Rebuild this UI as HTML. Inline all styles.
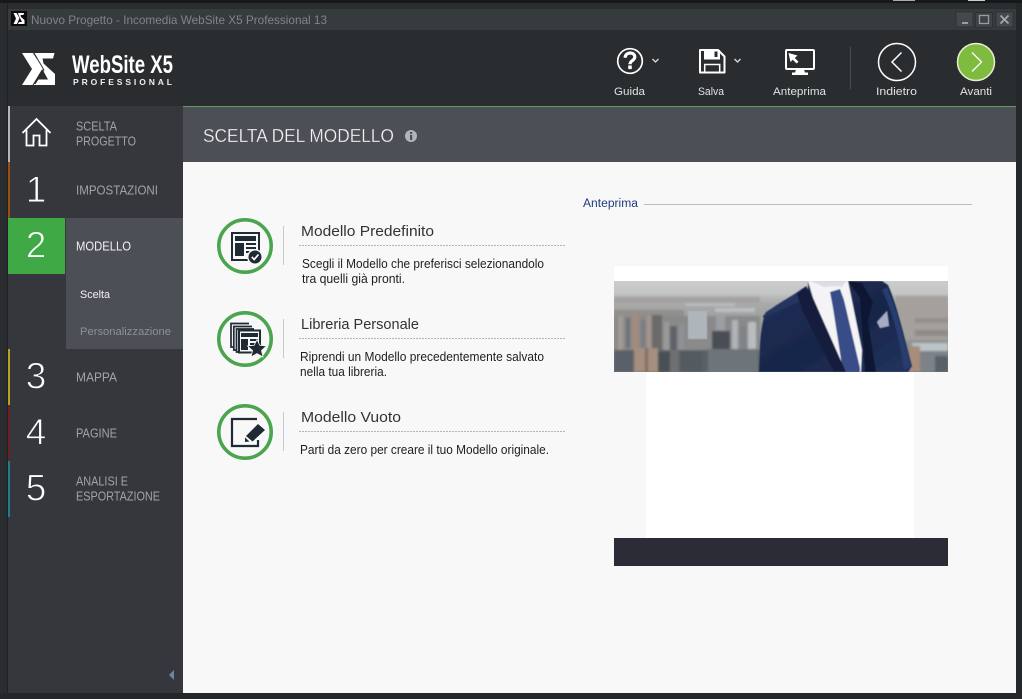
<!DOCTYPE html>
<html lang="it">
<head>
<meta charset="utf-8">
<title>Incomedia WebSite X5</title>
<style>
html,body{margin:0;padding:0;background:#2a2d30;width:1022px;height:699px;overflow:hidden}
svg{display:block}
text{font-family:"Liberation Sans",sans-serif}
</style>
</head>
<body>
<svg xmlns="http://www.w3.org/2000/svg" width="1022" height="699" viewBox="0 0 1022 699">
<defs>
<linearGradient id="sky" x1="0" y1="0" x2="0" y2="1">
<stop offset="0" stop-color="#cbcdcc"/><stop offset=".13" stop-color="#c3c6c5"/>
<stop offset=".25" stop-color="#a8a9a8"/><stop offset=".7" stop-color="#8f9194"/><stop offset="1" stop-color="#70767c"/>
</linearGradient>
<linearGradient id="suit" x1="0" y1="0" x2="1" y2="1">
<stop offset="0" stop-color="#22325a"/><stop offset=".55" stop-color="#18264a"/><stop offset="1" stop-color="#22345e"/>
</linearGradient>
<filter id="b2" x="-5%" y="-5%" width="110%" height="110%"><feGaussianBlur stdDeviation="1"/></filter>
<filter id="b3" x="-5%" y="-5%" width="110%" height="110%"><feGaussianBlur stdDeviation=".5"/></filter>
<clipPath id="img"><rect x="614" y="281" width="334" height="91"/></clipPath>
</defs>

<!-- frame -->
<rect width="1022" height="699" fill="#2a2d30"/>
<rect width="1022" height="3" fill="#17181a"/>
<rect x="893" y="0" width="22" height="1" fill="#aaa"/>
<rect x="968" y="0" width="17" height="1" fill="#ccc"/>
<rect x="7" y="3" width="1" height="690" fill="#1f2123"/>
<rect x="0" y="693" width="1022" height="6" fill="#24272a"/>
<rect x="1016" y="3" width="6" height="696" fill="#25282b"/>

<!-- title bar -->
<rect x="8" y="9" width="1008" height="21" fill="#363b3e"/>
<rect x="11" y="11" width="16" height="15" fill="#0c0c0c"/>
<path d="M13.500,13H16.500L19.500,18L17,24H13.500L16,18.500ZM18,13H24L23.500,15H20.500L21,17L24.500,20V24H18L19,22H22L18.500,15Z" fill="#fff"/>
<text x="31" y="24" font-size="12" fill="#7f8588" textLength="296" lengthAdjust="spacingAndGlyphs">Nuovo Progetto - Incomedia WebSite X5 Professional 13</text>

<!-- window buttons -->
<rect x="956" y="12" width="17" height="15" fill="#45494c" stroke="#2e3235"/>
<rect x="962" y="22" width="6" height="2" fill="#9a9ea1"/>
<rect x="975.500" y="12.500" width="17" height="15" fill="#3f4346" stroke="#2e3235"/>
<rect x="979.500" y="15.500" width="9" height="8" fill="none" stroke="#9a9ea1" stroke-width="1.300"/>
<rect x="996" y="12" width="17" height="15" fill="#45494c" stroke="#2e3235"/>
<path d="M1000.500,15.500L1008.500,23.500M1008.500,15.500L1000.500,23.500" stroke="#a5a9ac" stroke-width="1.800"/>

<!-- logo -->
<path d="M22,53H33L42.500,68.500L32.500,85H22L32,69Z" fill="#fff"/>
<path d="M34.500,53H54.500L53,58.500H42.500L43.500,63.500L55,74V85H33.500L38.500,79.500H48L37.500,60.500Z" fill="#fff"/>
<path d="M34,53L44,70L35,84" fill="none" stroke="#2a2d30" stroke-width=".9"/>
<text x="72" y="73" font-size="25" font-weight="bold" fill="#fff" textLength="101" lengthAdjust="spacingAndGlyphs">WebSite X5</text>
<text x="73" y="85" font-size="8.500" font-weight="bold" fill="#eee" textLength="99">PROFESSIONAL</text>

<!-- toolbar icons -->
<circle cx="630" cy="61" r="12.300" fill="none" stroke="#fff" stroke-width="1.700"/>
<path d="M625.200,57.800C625.200,51.500 634.800,51.500 634.800,57C634.800,60.500 630,60.500 630,64.200" fill="none" stroke="#fff" stroke-width="3.200"/>
<rect x="628.200" y="65.500" width="3.600" height="3.600" fill="#fff"/>
<path d="M652.500,59L655.500,62L658.500,59" fill="none" stroke="#ddd" stroke-width="1.300"/>

<path d="M700,50H718L724.500,56.500V72.500H700Z" fill="none" stroke="#fff" stroke-width="2" stroke-linejoin="round"/>
<rect x="704" y="50" width="16" height="9.500" fill="#fff"/>
<rect x="714.500" y="51.500" width="3" height="5.500" fill="#2a2d30"/>
<rect x="704.700" y="64.500" width="15" height="8" fill="none" stroke="#fff" stroke-width="1.500"/>
<path d="M734.500,59L737.500,62L740.500,59" fill="none" stroke="#ddd" stroke-width="1.300"/>

<rect x="786" y="50" width="28" height="19" rx="1" fill="none" stroke="#fff" stroke-width="2"/>
<path d="M788.500,53L797.500,55.500L794.800,58L798.500,61.800L796.500,63.500L792.800,59.800L790.500,62Z" fill="#fff"/>
<path d="M796,69.500H804L805,72.500H808V75H792V72.500H795Z" fill="#fff"/>

<rect x="850" y="47" width="1" height="42" fill="#4a4e51"/>
<circle cx="897" cy="62" r="18.500" fill="none" stroke="#fff" stroke-width="1.500"/>
<path d="M901.500,52.500L892,62L901.500,71.500" fill="none" stroke="#fff" stroke-width="1.500"/>
<circle cx="976" cy="62" r="18.500" fill="#7fbb3f" stroke="#e4efd2" stroke-width="1.500"/>
<path d="M972,52.500L981.500,62L972,71.500" fill="none" stroke="#f0f6e4" stroke-width="1.500"/>

<g font-size="11" fill="#dfe1e2">
<text x="614" y="95" textLength="31" lengthAdjust="spacingAndGlyphs">Guida</text>
<text x="698" y="95" textLength="26" lengthAdjust="spacingAndGlyphs">Salva</text>
<text x="773" y="95" textLength="53" lengthAdjust="spacingAndGlyphs">Anteprima</text>
<text x="876" y="95" textLength="41" lengthAdjust="spacingAndGlyphs">Indietro</text>
<text x="960" y="95" textLength="32" lengthAdjust="spacingAndGlyphs">Avanti</text>
</g>

<!-- sidebar -->
<rect x="8" y="106" width="175" height="587" fill="#36373c"/>
<rect x="8" y="106" width="2" height="56" fill="#b4b6b8"/>
<rect x="8" y="162" width="2" height="56" fill="#9a4f12"/>
<rect x="8" y="218" width="57" height="56" fill="#3faa45"/>
<rect x="66" y="218" width="117" height="131" fill="#4c4f56"/>
<rect x="8" y="349" width="2" height="56" fill="#b8a11c"/>
<rect x="8" y="405" width="2" height="56" fill="#6e1f26"/>
<rect x="8" y="461" width="2" height="56" fill="#1d7f8a"/>

<path d="M22.500,133L36.500,119L50.500,133" fill="none" stroke="#fff" stroke-width="1.800"/>
<path d="M26.500,130V145.500H33.500V135.500H39.500V145.500H46.500V130" fill="none" stroke="#fff" stroke-width="1.800"/>

<g font-size="37" fill="#fff" text-anchor="middle" stroke="#36373c" stroke-width=".9">
<text x="36" y="202">1</text>
<text x="36" y="257.500" stroke="#3faa45">2</text>
<text x="36" y="388.500">3</text>
<text x="36" y="444.500">4</text>
<text x="36" y="500.500">5</text>
</g>

<g font-size="12.500" fill="#a1a3a7">
<text x="76" y="130.500" textLength="41" lengthAdjust="spacingAndGlyphs">SCELTA</text>
<text x="76" y="145.500" textLength="60" lengthAdjust="spacingAndGlyphs">PROGETTO</text>
<text x="76" y="194.500" textLength="82" lengthAdjust="spacingAndGlyphs">IMPOSTAZIONI</text>
<text x="76" y="250.500" textLength="55" lengthAdjust="spacingAndGlyphs" fill="#f2f2f2">MODELLO</text>
<text x="76" y="381.500" textLength="41" lengthAdjust="spacingAndGlyphs">MAPPA</text>
<text x="76" y="437.500" textLength="41" lengthAdjust="spacingAndGlyphs">PAGINE</text>
<text x="76" y="485.500" textLength="52" lengthAdjust="spacingAndGlyphs">ANALISI E</text>
<text x="76" y="500.500" textLength="84" lengthAdjust="spacingAndGlyphs">ESPORTAZIONE</text>
</g>
<text x="80" y="298" font-size="11" fill="#f2f2f2" textLength="30" lengthAdjust="spacingAndGlyphs">Scelta</text>
<text x="80" y="335" font-size="11" fill="#8e9197" textLength="91" lengthAdjust="spacingAndGlyphs">Personalizzazione</text>
<path d="M174,670V680L169,675Z" fill="#6b86a8"/>

<!-- main -->
<rect x="183" y="106" width="833" height="56" fill="#4c4f56"/>
<rect x="183" y="106" width="833" height="1" fill="#5f9a62"/>
<rect x="183" y="162" width="833" height="531" fill="#f8f8f8"/>
<text x="203" y="142" font-size="18.500" fill="#f1f1f1" stroke="#4c4f56" stroke-width=".25" textLength="191" lengthAdjust="spacingAndGlyphs">SCELTA DEL MODELLO</text>
<circle cx="411" cy="136" r="6" fill="#b1b4b9"/>
<rect x="410" y="135" width="2.200" height="5" fill="#4c4f56"/>
<rect x="410" y="132" width="2.200" height="2" fill="#4c4f56"/>

<!-- option circles -->
<g fill="none" stroke="#4aa54e" stroke-width="3.600">
<circle cx="245" cy="246" r="26.200"/>
<circle cx="245" cy="339" r="26.200"/>
<circle cx="245" cy="432" r="26.200"/>
</g>
<g fill="#c9c9c9">
<rect x="283" y="226" width="1" height="39"/>
<rect x="283" y="319" width="1" height="39"/>
<rect x="283" y="412" width="1" height="39"/>
</g>
<g stroke="#b5b5b5" stroke-dasharray="2 1" stroke-width="1">
<path d="M299,245.500H565"/>
<path d="M299,338.500H565"/>
<path d="M299,431.500H565"/>
</g>

<!-- icon 1 -->
<rect x="232" y="233" width="27" height="27" fill="none" stroke="#1f2a35" stroke-width="2"/>
<rect x="235" y="236" width="21" height="5" fill="#1f2a35"/>
<rect x="235" y="243" width="9" height="13" fill="#1f2a35"/>
<rect x="246" y="243" width="10" height="2" fill="#1f2a35"/>
<rect x="246" y="247" width="10" height="2" fill="#1f2a35"/>
<rect x="246" y="251" width="6" height="2" fill="#1f2a35"/>
<circle cx="255" cy="257" r="8" fill="#f8f8f8"/>
<circle cx="255" cy="257" r="6.500" fill="#1f2a35"/>
<path d="M251.800,257L254.200,259.500L258.500,254.500" fill="none" stroke="#fff" stroke-width="1.700"/>

<!-- icon 2 -->
<g fill="none" stroke="#1f2a35" stroke-width="1.700">
<path d="M249,323.500H231V347H233"/>
<path d="M252,326.500H233.800V350H236"/>
<path d="M254,329H236.500V352H238"/>
</g>
<rect x="239" y="330.500" width="21" height="22" fill="#f8f8f8" stroke="#1f2a35" stroke-width="2"/>
<rect x="241" y="333" width="17" height="4" fill="#1f2a35"/>
<rect x="241" y="339" width="7" height="11" fill="#1f2a35"/>
<rect x="250" y="339" width="8" height="2" fill="#1f2a35"/>
<rect x="250" y="343" width="5" height="2" fill="#1f2a35"/>
<path d="M257,339.500L259.800,345.300L266.500,346L261.500,350.500L263,357L257,353.600L251,357L252.500,350.500L247.500,346L254.200,345.300Z" fill="#1f2a35" stroke="#f8f8f8" stroke-width=".8"/>

<!-- icon 3 -->
<path d="M257,419H232V446H258V440" fill="none" stroke="#1f2a35" stroke-width="2.200"/>
<path d="M258,424L265,430L252.500,441.500L246,436Z" fill="#1f2a35"/>
<path d="M245,437.500L249.500,441.500L245,442Z" fill="#1f2a35"/>

<!-- option texts -->
<g font-size="15" fill="#333">
<text x="301" y="236" textLength="133" lengthAdjust="spacingAndGlyphs">Modello Predefinito</text>
<text x="301" y="329" textLength="118" lengthAdjust="spacingAndGlyphs">Libreria Personale</text>
<text x="301" y="422" textLength="100" lengthAdjust="spacingAndGlyphs">Modello Vuoto</text>
</g>
<g font-size="12.500" fill="#1e1e1e">
<text x="302" y="268" textLength="242" lengthAdjust="spacingAndGlyphs">Scegli il Modello che preferisci selezionandolo</text>
<text x="302" y="283" textLength="103" lengthAdjust="spacingAndGlyphs">tra quelli già pronti.</text>
<text x="300" y="361" textLength="244" lengthAdjust="spacingAndGlyphs">Riprendi un Modello precedentemente salvato</text>
<text x="300" y="376" textLength="87" lengthAdjust="spacingAndGlyphs">nella tua libreria.</text>
<text x="300" y="454" textLength="249" lengthAdjust="spacingAndGlyphs">Parti da zero per creare il tuo Modello originale.</text>
</g>

<!-- preview -->
<text x="583" y="207" font-size="11.500" fill="#1f3a80" textLength="55" lengthAdjust="spacingAndGlyphs">Anteprima</text>
<rect x="644" y="204" width="328" height="1" fill="#bdbdbd"/>
<rect x="614" y="266" width="334" height="15" fill="#fff"/>
<rect x="646" y="372" width="268" height="166" fill="#fff"/>
<rect x="614" y="538" width="334" height="28" fill="#2c2c36"/>

<g clip-path="url(#img)">
<rect x="614" y="281" width="334" height="91" fill="url(#sky)"/>
<g filter="url(#b2)">
<rect x="614" y="297" width="146" height="6" fill="#a3a2a0"/>
<rect x="685" y="303" width="50" height="3" fill="#b8bdc0"/>
<rect x="715" y="308" width="40" height="4" fill="#bcc0c2"/>
<rect x="614" y="310" width="70" height="6" fill="#928f8d"/>
<rect x="614" y="316" width="146" height="34" fill="#8a8a8b"/>
<rect x="618" y="316" width="5" height="34" fill="#a39c96"/>
<rect x="626" y="318" width="4" height="30" fill="#6f7276"/>
<rect x="632" y="314" width="7" height="36" fill="#a18b7c"/>
<rect x="641" y="320" width="4" height="30" fill="#7c7d80"/>
<rect x="647" y="316" width="4" height="34" fill="#a8948a"/>
<rect x="652" y="315" width="10" height="36" fill="#6c6a6b"/>
<rect x="664" y="322" width="5" height="28" fill="#9a9a9c"/>
<rect x="670" y="326" width="7" height="24" fill="#5f6469"/>
<rect x="679" y="324" width="5" height="26" fill="#8f9194"/>
<rect x="712" y="331" width="18" height="19" fill="#484d54"/>
<rect x="716" y="316" width="9" height="14" fill="#9a9fa3"/>
<rect x="732" y="320" width="6" height="30" fill="#b0b4b7"/>
<rect x="740" y="326" width="6" height="24" fill="#7f8488"/>
<rect x="748" y="322" width="8" height="28" fill="#b9bdbf"/>
<rect x="614" y="350" width="146" height="22" fill="#5a6168"/>
<rect x="634" y="348" width="24" height="24" fill="#a58e7d"/>
<rect x="645" y="348" width="3" height="24" fill="#7f6e63"/>
<rect x="658" y="352" width="12" height="20" fill="#4a5057"/>
<rect x="670" y="350" width="9" height="22" fill="#6f6f70"/>
<rect x="680" y="352" width="22" height="20" fill="#535a61"/>
<rect x="708" y="349" width="50" height="23" fill="#6d747a"/>
<rect x="895" y="296" width="53" height="44" fill="#a5a09c"/>
<rect x="915" y="318" width="33" height="5" fill="#948f8c"/>
<rect x="915" y="330" width="33" height="6" fill="#8f8b88"/>
<rect x="912" y="343" width="36" height="8" fill="#bcc4c9"/>
<rect x="909" y="346" width="11" height="26" fill="#a88c7b"/>
<rect x="920" y="351" width="28" height="21" fill="#7b8288"/>
<rect x="935" y="356" width="13" height="16" fill="#5a6168"/>
</g>
<rect x="688" y="311" width="19" height="28" fill="#aeb6bb" filter="url(#b3)"/>
<g filter="url(#b3)">
<path d="M808,281H882L888,285C897,305 905,340 912,366L908,372H759L760,345C761,330 763,318 766,312C778,304 795,298 808,290Z" fill="url(#suit)"/>
<path d="M763,316C772,306 790,298 803,288L810,296C790,306 775,312 763,318Z" fill="#25365f"/>
<path d="M887,287C897,310 904,340 911,366L904,370C900,340 892,310 882,290Z" fill="#283e6e"/>
<path d="M808,281L848,281L862,350L861,372H845L813,298Z" fill="#f4f4f6"/>
<path d="M810,281H846L842,287L836,286L824,287Z" fill="#dedee2"/>
<path d="M830,292L840,289L844,300L860,368V372H843L833,308Z" fill="#384e88"/>
<path d="M806,286L813,298L846,372H834L803,312L797,294Z" fill="#131f3e"/>
<path d="M848,281L860,298L865,372H876L868,322L873,302L862,283Z" fill="#0f1830"/>
<path d="M877,322L887,311L889,326L880,328Z" fill="#a5adc6"/>
</g>
</g>
</svg>
</body>
</html>
